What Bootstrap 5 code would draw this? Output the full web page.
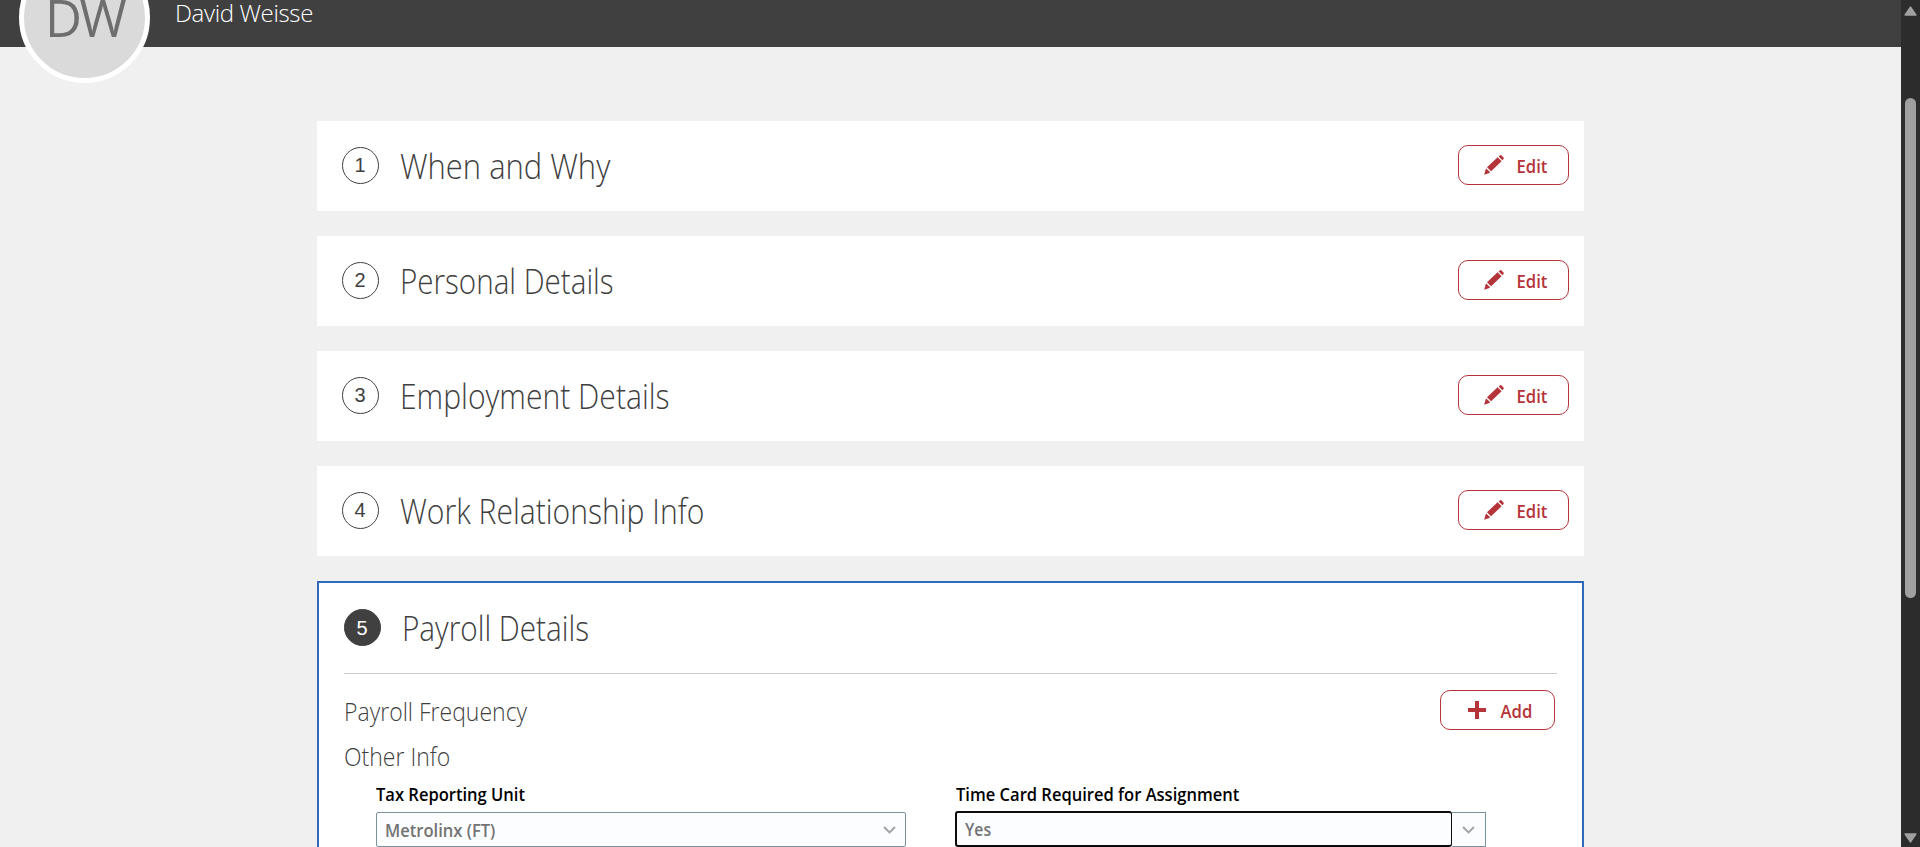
<!DOCTYPE html>
<html lang="en">
<head>
<meta charset="utf-8">
<meta name="viewport" content="width=device-width, initial-scale=1">
<title>David Weisse</title>
<link href="https://cdn.jsdelivr.net/npm/bootstrap@5.3.0/dist/css/bootstrap.min.css" rel="stylesheet">
<style>
html, body { height: 100%; overflow: hidden; }
body { background: #f0f0f0; color: #3f3f3f; font-family: "Open Sans", "Noto Sans", sans-serif; }
.viewport { height: 100vh; overflow: hidden; }
.topbar { height: 47px; background: #404040; padding-left: 19px; }
.avatar { width: 131px; height: 131px; margin-top: -48px; border: 5px solid #fff; background: #dadada; color: #6e6e6e; font-size: 51px; line-height: 1; letter-spacing: -2.5px; }
.person { margin: -4px 0 0 25px; font-size: 24px; line-height: 34px; font-weight: 300; color: #fff; letter-spacing: -.35px; }
.steps { width: 1267px; margin: 74px auto 0; gap: 25px; }
.step { background: #fff; }
.step-closed { height: 90px; padding: 0 15px 2px 25px; }
.num { width: 37px; height: 37px; border: 1px solid #404040; padding-right: 1px; font: 20px/1 "Liberation Sans", sans-serif; }
.num-on { background: #404040; color: #fff; margin-top: -2px; }
.title span, .sub span, .btn-act span, .field span { display: inline-block; transform: scaleX(var(--sx, 1)); transform-origin: left center; }
.title { --sx: .885; margin: 0 0 0 21px; font-size: 34px; line-height: 44px; font-weight: 300; white-space: nowrap; }
.step:nth-child(1) .title { --sx: .91; }
.step:nth-child(2) .title { --sx: .87; }
.step-closed .title { padding-top: 2px; }
.step-open .title { --sx: .873; margin-top: -2px; }
.sub { --sx: .92; margin: 0; font-size: 25px; line-height: 34px; font-weight: 300; white-space: nowrap; padding-top: 1px; }
.btn-act { --sx: .925; height: 40px; width: 111px; padding: 0 21px 0 25px; border: 1px solid #b5343a; border-radius: 10px; color: #b5343a; background: #fff; font-size: 18px; line-height: 1; font-weight: 600; }
.btn-act span { transform-origin: right center; padding-top: 1px; }
.btn-add { width: 115px; margin-right: 2px; padding: 0 22px 0 27px; }
.step-open { height: 320px; border: 2px solid #2f6ab8; padding: 0 25px; }
.open-head { height: 91px; border-bottom: 1px solid #cdcdcd; padding-top: 1px; }
.freq { height: 40px; margin-top: 16px; }
.fields { margin: 9px 0 0 32px; gap: 49px; }
.field { --sx: .945; width: 531px; flex: none; }
.field:first-child { width: 530px; }
.field label { display: block; height: 30px; padding-left: 1px; font-size: 17.5px; line-height: 24px; font-weight: 600; color: #000; white-space: nowrap; }
.field:first-child label { padding-left: 0; }
.pick { height: 35px; border: 1px solid #7b929d; border-radius: 2px; background: #fbfdff; color: #737373; font-size: 17.5px; font-weight: 600; padding: 0 9px 0 8px; }
.pick span { padding-top: 1px; }
.pick-focus { --sx: .9; width: 497px; height: 36px; margin: -1px 0 0; border: 2px solid #0c0c0c; border-right-width: 1px; border-radius: 3px; }
.pick-drop { width: 34px; border-left: 0; border-radius: 0; padding: 0 0 0 10px; }
.track { width: 19px; background: #2c2c2c; padding-top: 6px; padding-bottom: 4px; }
.thumb { width: 11px; height: 500px; margin-top: 82px; border-radius: 6px; background: #a0a0a0; }
</style>
</head>
<body>
<svg class="d-none" xmlns="http://www.w3.org/2000/svg">
  <symbol id="pencil" viewBox="0 0 20 20"><path d="M14.6 1.5 15.8.4q.8-.7 1.5-.1l2.2 2.2q.7.8 0 1.5l-1.1 1.2zM13.6 2.3 17.6 6.2 7.1 16.3 3 12.3zM2.2 13.4 6.2 17.2 4.7 18.2 .2 19.8 1.5 14.8z" fill="#b5343a"/></symbol>
  <symbol id="chev" viewBox="0 0 13 8"><path d="M1 1 6.5 6.4 12 1" fill="none" stroke="#a3a3a3" stroke-width="2"/></symbol>
</svg>
<div class="viewport d-flex">
  <main class="flex-grow-1">
    <header class="topbar d-flex align-items-start">
      <div class="avatar rounded-circle d-flex align-items-center justify-content-center flex-shrink-0"><span>DW</span></div>
      <div class="person"><span>David Weisse</span></div>
    </header>
    <div class="steps d-flex flex-column">
      <section class="step step-closed d-flex align-items-center">
        <span class="num rounded-circle d-flex align-items-center justify-content-center">1</span>
        <h2 class="title"><span>When and Why</span></h2>
        <button class="btn btn-act ms-auto d-flex align-items-center justify-content-between"><svg width="20" height="20"><use href="#pencil"/></svg><span>Edit</span></button>
      </section>
      <section class="step step-closed d-flex align-items-center">
        <span class="num rounded-circle d-flex align-items-center justify-content-center">2</span>
        <h2 class="title"><span>Personal Details</span></h2>
        <button class="btn btn-act ms-auto d-flex align-items-center justify-content-between"><svg width="20" height="20"><use href="#pencil"/></svg><span>Edit</span></button>
      </section>
      <section class="step step-closed d-flex align-items-center">
        <span class="num rounded-circle d-flex align-items-center justify-content-center">3</span>
        <h2 class="title"><span>Employment Details</span></h2>
        <button class="btn btn-act ms-auto d-flex align-items-center justify-content-between"><svg width="20" height="20"><use href="#pencil"/></svg><span>Edit</span></button>
      </section>
      <section class="step step-closed d-flex align-items-center">
        <span class="num rounded-circle d-flex align-items-center justify-content-center">4</span>
        <h2 class="title"><span>Work Relationship Info</span></h2>
        <button class="btn btn-act ms-auto d-flex align-items-center justify-content-between"><svg width="20" height="20"><use href="#pencil"/></svg><span>Edit</span></button>
      </section>
      <section class="step step-open">
        <div class="open-head d-flex align-items-center">
          <span class="num num-on rounded-circle d-flex align-items-center justify-content-center">5</span>
          <h2 class="title"><span>Payroll Details</span></h2>
        </div>
        <div class="freq d-flex align-items-center justify-content-between">
          <h3 class="sub"><span>Payroll Frequency</span></h3>
          <button class="btn btn-act btn-add d-flex align-items-center justify-content-between"><svg width="18" height="18" viewBox="0 0 18 18"><path d="M9 2v14M2 9h14" stroke="#b5343a" stroke-width="4" stroke-linecap="square" fill="none"/></svg><span>Add</span></button>
        </div>
        <h3 class="sub mt-2"><span>Other Info</span></h3>
        <div class="fields d-flex">
          <div class="field">
            <label><span>Tax Reporting Unit</span></label>
            <div class="pick d-flex align-items-center justify-content-between"><span>Metrolinx (FT)</span><svg width="13" height="8"><use href="#chev"/></svg></div>
          </div>
          <div class="field">
            <label><span>Time Card Required for Assignment</span></label>
            <div class="d-flex">
              <div class="pick pick-focus d-flex align-items-center"><span>Yes</span></div>
              <div class="pick pick-drop d-flex align-items-center"><svg width="13" height="8"><use href="#chev"/></svg></div>
            </div>
          </div>
        </div>
      </section>
    </div>
  </main>
  <aside class="track d-flex flex-column align-items-center flex-shrink-0">
    <svg width="13" height="10" viewBox="0 0 13 10"><path d="M6.5 1.2 11.8 9H1.2z" fill="#a0a0a0" stroke="#a0a0a0" stroke-width="1.6" stroke-linejoin="round"/></svg>
    <div class="thumb"></div>
    <svg class="mt-auto" width="13" height="10" viewBox="0 0 13 10"><path d="M6.5 8.8 11.8 1H1.2z" fill="#a0a0a0" stroke="#a0a0a0" stroke-width="1.6" stroke-linejoin="round"/></svg>
  </aside>
</div>
<script src="https://cdn.jsdelivr.net/npm/bootstrap@5.3.0/dist/js/bootstrap.bundle.min.js"></script>
</body>
</html>
